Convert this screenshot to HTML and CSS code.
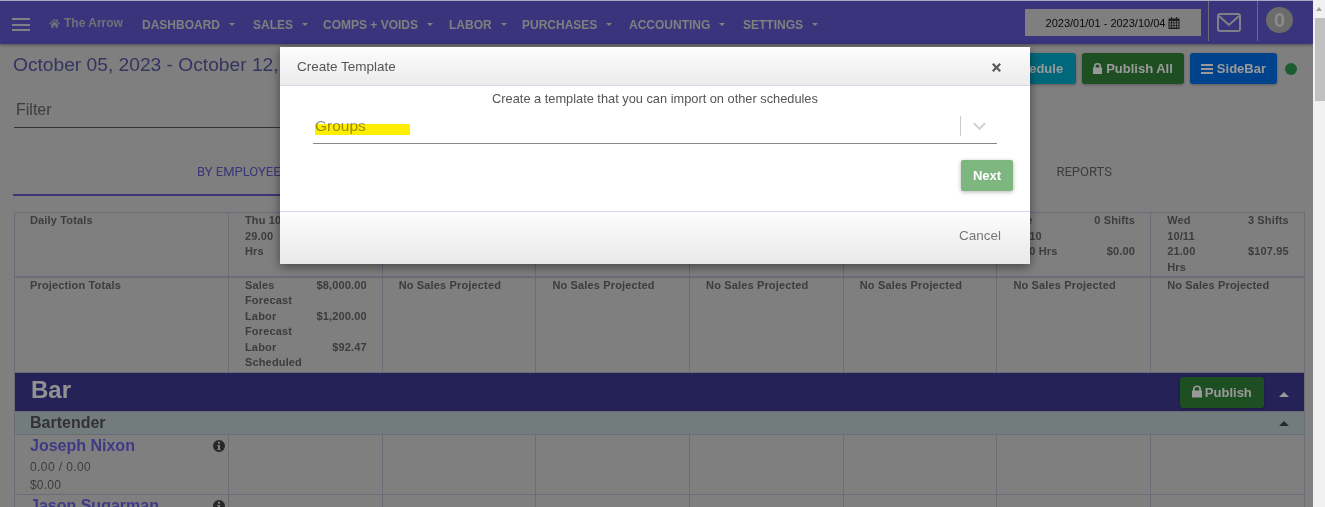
FILE: index.html
```html
<!DOCTYPE html>
<html lang="en">
<head>
<meta charset="utf-8">
<title>Create Template</title>
<link rel="stylesheet" href="styles.css">
</head>
<body>
<div class="viewport">
  <div class="app">
    <nav class="navbar">
      <span class="burger"><i></i><i></i><i></i></span>
      <a class="brand"><svg class="ico-home" viewBox="0 0 16 14"><path d="M8 1 0 8l1 1 7-6 7 6 1-1-3-2.600V1.500h-2v2.200zM3 9v5h3.500v-3.500h3V14H13V9L8 4.700z"/></svg>The Arrow</a>
      <ul class="menu">
        <li class="m1">DASHBOARD<b></b></li>
        <li class="m2">SALES<b></b></li>
        <li class="m3">COMPS + VOIDS<b></b></li>
        <li class="m4">LABOR<b></b></li>
        <li class="m5">PURCHASES<b></b></li>
        <li class="m6">ACCOUNTING<b></b></li>
        <li class="m7">SETTINGS<b></b></li>
      </ul>
      <div class="nav-right">
        <div class="date-box">2023/01/01 - 2023/10/04 <svg class="ico-cal" viewBox="0 0 12 12"><path d="M3 0h1v1.500h4V0h1v1.500h2.500V12H.5V1.500H3zM1.500 4v1.500H3V4zm2.300 0v1.500h1.700V4zm2.500 0v1.500H8V4zm2.500 0v1.500h1.700V4zM1.500 6.300V8H3V6.300zm2.300 0V8h1.700V6.300zm2.500 0V8H8V6.300zm2.500 0V8h1.700V6.300zM1.500 8.800v1.700H3V8.800zm2.300 0v1.700h1.700V8.800zm2.500 0v1.700H8V8.800zm2.500 0v1.700h1.700V8.800z" fill-rule="evenodd"/></svg></div>
        <div class="nav-cell mail"><svg class="ico-mail" viewBox="0 0 24 19"><rect x="1" y="1" width="22" height="17" rx="2" fill="none" stroke-width="2"/><path d="M2 3l10 9 10-9" fill="none" stroke-width="2"/></svg></div>
        <div class="nav-cell user"><span class="badge">0</span></div>
      </div>
    </nav>

    <main class="content">
      <div class="title-row">
        <h1 class="range">October 05, 2023 - October 12, 2023</h1>
        <div class="actions">
          <button class="btn teal">Schedule</button>
          <button class="btn green"><svg class="ico-lock" viewBox="0 0 10 12"><path d="M1 5V3.500a4 3.500 0 0 1 8 0V5h1v7H0V5zm1.800 0h4.400V3.500a2.200 2 0 0 0-4.400 0z"/></svg> Publish All</button>
          <button class="btn blue"><svg class="ico-bars" viewBox="0 0 12 10"><path d="M0 0h12v2H0zM0 4h12v2H0zM0 8h12v2H0z"/></svg> SideBar</button>
          <span class="dot"></span>
        </div>
      </div>

      <div class="filter">Filter</div>

      <div class="tabs">
        <div class="tab active">BY EMPLOYEE</div>
        <div class="tab middle"></div>
        <div class="tab">REPORTS</div>
      </div>

      <table class="grid">
        <colgroup>
          <col class="c-name"><col class="c-day"><col class="c-day"><col class="c-day"><col class="c-day"><col class="c-day"><col class="c-day"><col class="c-day">
        </colgroup>
        <tr class="totals">
          <th>Daily Totals</th>
          <td><div class="pair"><span>Thu 10/05</span><span>4 Shifts</span><span>29.00<br>Hrs</span><span>$149.50</span></div></td>
          <td></td><td></td><td></td>
          <td><div class="pair"><span></span><span></span><span><br><br>Hrs</span><span></span></div></td>
          <td><div class="pair"><span>Tue<br>10/10</span><span>0 Shifts</span><span>0.00 Hrs</span><span>$0.00</span></div></td>
          <td><div class="pair"><span>Wed<br>10/11</span><span>3 Shifts</span><span>21.00<br>Hrs</span><span>$107.95</span></div></td>
        </tr>
        <tr class="proj">
          <th>Projection Totals</th>
          <td><div class="pair"><span>Sales<br>Forecast</span><span>$8,000.00</span><span>Labor<br>Forecast</span><span>$1,200.00</span><span>Labor<br>Scheduled</span><span>$92.47</span></div></td>
          <td>No Sales Projected</td><td>No Sales Projected</td><td>No Sales Projected</td><td>No Sales Projected</td><td>No Sales Projected</td><td>No Sales Projected</td>
        </tr>
        <tr class="group">
          <td colspan="8">
            <div class="group-in">
              <span class="group-name">Bar</span>
              <button class="btn green small"><svg class="ico-lock big" viewBox="0 0 10 12"><path d="M1 5V3.500a4 3.500 0 0 1 8 0V5h1v7H0V5zm1.800 0h4.400V3.500a2.200 2 0 0 0-4.400 0z"/></svg> Publish</button>
              <span class="tri light"></span>
            </div>
          </td>
        </tr>
        <tr class="role">
          <td colspan="8"><div class="role-in"><span>Bartender</span><span class="tri dark"></span></div></td>
        </tr>
        <tr class="emp">
          <td class="emp-cell"><div class="emp-top"><a>Joseph Nixon</a><svg class="ico-info" viewBox="0 0 12 12"><path fill-rule="evenodd" d="M6 0a6 6 0 1 1 0 12A6 6 0 0 1 6 0zM5 1.800v2h2v-2zM4.200 5v1H5v3H4.200v1h3.600V9H7V5z"/></svg></div><div class="emp-hrs">0.00 / 0.00</div><div class="emp-pay">$0.00</div></td>
          <td></td><td></td><td></td><td></td><td></td><td></td><td></td>
        </tr>
        <tr class="emp">
          <td class="emp-cell"><div class="emp-top"><a>Jason Sugarman</a><svg class="ico-info" viewBox="0 0 12 12"><path fill-rule="evenodd" d="M6 0a6 6 0 1 1 0 12A6 6 0 0 1 6 0zM5 1.800v2h2v-2zM4.200 5v1H5v3H4.200v1h3.600V9H7V5z"/></svg></div></td>
          <td></td><td></td><td></td><td></td><td></td><td></td><td></td>
        </tr>
      </table>
    </main>

    <div class="backdrop"></div>

    <section class="modal">
      <header class="modal-head">
        <span>Create Template</span>
        <svg class="ico-x" viewBox="0 0 10 10"><path d="M1.800 0 5 3.200 8.200 0 10 1.800 6.800 5 10 8.200 8.200 10 5 6.800 1.800 10 0 8.200 3.200 5 0 1.800z"/></svg>
      </header>
      <div class="modal-body">
        <p class="hint">Create a template that you can import on other schedules</p>
        <div class="select">
          <span class="placeholder">Groups</span>
          <span class="mark"></span>
          <span class="sep"></span>
          <svg class="ico-chev" viewBox="0 0 14 8"><path d="M1 1l6 6 6-6" fill="none" stroke-width="2"/></svg>
        </div>
        <div class="next-row"><button class="next">Next</button></div>
      </div>
      <footer class="modal-foot">Cancel</footer>
    </section>
  </div>
  <div class="scrollbar"><span class="arrow"></span><span class="thumb"></span></div>
</div>
</body>
</html>
```
FILE: styles.css
```css
* { box-sizing: border-box; }
html, body { margin: 0; height: 507px; overflow: hidden; }
body { font-family: "Liberation Sans", Arial, sans-serif; font-size: 12px; background: #d4d4d4; color: #666; }
.viewport { display: flex; height: 507px; }
.app { position: relative; flex: 1; min-width: 0; height: 507px; overflow: hidden; border-top: 1px solid #a3a9c2; background: #d4d4d4; }
.scrollbar { width: 12px; background: #f1f1f1; display: flex; flex-direction: column; align-items: stretch; }
.arrow { height: 18px; position: relative; }
.arrow::after { content: ""; position: absolute; left: 3px; top: 7px; border: 3px solid transparent; border-top: 0; border-bottom: 4px solid #a3a3a3; }
.thumb { height: 83px; margin-left: 2px; background: #c1c1c1; }

/* navbar */
.navbar { height: 43px; background: #5f57cf; display: flex; align-items: center; color: #d4d4d4; box-shadow: 0 1px 3px rgba(0,0,0,.4); position: relative; }
.burger { width: 18px; margin-left: 12px; display: flex; flex-direction: column; gap: 3.500px; margin-top: 4px; }
.burger i { display: block; height: 2px; background: #d6d6e0; }
.brand { margin-left: 19px; width: 93px; font-weight: 700; font-size: 12px; color: #bcbcc8; display: flex; align-items: center; gap: 4px; margin-top: 1px; }
.ico-home { width: 11px; height: 10px; fill: #bcbcc8; }
.menu { list-style: none; margin: 4px 0 0; padding: 0; display: flex; font-weight: 700; font-size: 12px; }
.menu li { display: flex; align-items: center; white-space: nowrap; }
.menu b { width: 0; height: 0; border: 3.500px solid transparent; border-top: 3.500px solid #d4d4d4; border-bottom: 0; margin-left: 9px; }
.m1 { width: 111px; } .m2 { width: 70px; } .m3 { width: 126px; } .m4 { width: 73px; } .m5 { width: 107px; } .m6 { width: 114px; } .m7 { width: 80px; }
.nav-right { margin-left: auto; display: flex; align-items: flex-start; height: 43px; }
.date-box { width: 176px; height: 27px; margin: 8px 7px 0 0; background: #d4d4d4; color: #111; font-size: 11px; display: flex; align-items: center; justify-content: center; gap: 3px; }
.ico-cal { width: 12px; height: 12px; fill: #333; }
.nav-cell { border-left: 1px solid #b4b1d4; height: 40px; display: flex; align-items: center; }
.mail { width: 49px; padding-left: 8px; }
.user { width: 56px; padding-left: 8px; }
.ico-mail { width: 24px; height: 19px; stroke: #d6d6e0; margin-top: 3px; }
.badge { width: 27px; height: 26px; border-radius: 50%; background: #b2b2b2; color: #e6e6e6; font-weight: 700; font-size: 20px; display: flex; align-items: center; justify-content: center; margin-top: -2px; }

/* content */
.content { padding: 8px 9px 0 13px; }
.title-row { display: flex; justify-content: space-between; align-items: flex-start; height: 41px; }
.range { margin: 1px 0 0; font-weight: 400; font-size: 19.200px; line-height: 24px; color: #5a57a0; white-space: nowrap; }
.actions { display: flex; align-items: center; gap: 6px; margin-top: 1px; }
.btn { height: 31px; border: 0; border-radius: 3px; color: #fff; font: 700 13px "Liberation Sans", Arial, sans-serif; padding: 0 11px; white-space: nowrap; box-shadow: 0 1px 3px rgba(0,0,0,.3); display: flex; align-items: center; gap: 4px; }
.teal { background: #00aecb; width: 130px; justify-content: flex-end; padding-right: 13px; }
.green { background: #33843b; }
.blue { background: #0070ea; }
.dot { width: 12px; height: 12px; border-radius: 50%; background: #2f9a55; margin: 0 7px 0 2px; }
.ico-lock { width: 9px; height: 11px; fill: #fff; }
.ico-lock.big { width: 11px; height: 13px; margin-right: -1px; margin-top: -2px; }
.ico-bars { width: 12px; height: 10px; fill: #fff; }
.filter { height: 35px; margin: 0 700px 0 1px; border-bottom: 1px solid #555; font-size: 16px; line-height: 33px; padding-left: 2px; color: #666; }
.tabs { display: flex; margin-top: 24px; height: 44px; margin-bottom: 16px; }
.tab { font-family: Roboto, "Liberation Sans", sans-serif; font-size: 13px; text-align: center; line-height: 40px; color: #666; }
.tab:nth-child(1) { width: 452px; }
.tab:nth-child(2) { width: 400px; }
.tab:nth-child(3) { width: 440px; }
.tab.active { color: #635ac8; border-bottom: 2px solid #635ac8; }

/* grid */
.grid { table-layout: fixed; width: 1290px; margin-left: 1px; border-collapse: collapse; font-size: 11px; line-height: 15.600px; border: 1px solid #b5b3c9; }
.c-name { width: 214px; }
.c-day { width: 153.700px; }
.grid th, .grid td { border: 1px solid #b5b3c9; vertical-align: top; text-align: left; }
.totals th, .totals td, .proj th, .proj td { padding: 0 15px 0 16px; font-weight: 700; color: #666; letter-spacing: .15px; }
.totals th, .proj th { padding-left: 15px; }
.totals { height: 64px; border-bottom: 2px solid #b5b3c9; }
.proj { height: 96px; }
.pair { display: grid; grid-template-columns: 1fr auto; }
.pair span:nth-child(even) { text-align: right; }
.group td { padding: 0; background: #3e3993; }
.group-in { height: 38px; display: flex; align-items: center; padding: 0 15px 0 16px; color: #fff; }
.group-name { font-size: 24px; font-weight: 700; margin: -4px auto 0 0; color: #f4f4f4; }
.btn.small { height: 31px; width: 84px; padding: 0 12px; }
.tri { width: 0; height: 0; border: 5px solid transparent; border-top: 0; border-bottom: 5px solid; display: block; }
.tri.light { border-bottom-color: #fff; margin: 4px 0 0 15px; }
.tri.dark { border-bottom-color: #444; }
.role td { padding: 0; background: #bfcfcf; }
.role-in { height: 22px; display: flex; align-items: center; justify-content: space-between; padding: 0 15px; font-size: 16px; font-weight: 700; color: #555; }
.emp { height: 60px; }
.emp-cell { padding: 0 3px 0 15px; }
.emp-top { display: flex; justify-content: space-between; align-items: center; height: 22px; }
.emp-top a { font-size: 16px; font-weight: 700; color: #6a60e0; }
.ico-info { width: 12px; height: 12px; fill: #444; }
.emp-hrs { font-size: 12px; line-height: 18px; color: #666; margin-top: 1px; letter-spacing: .4px; }
.emp-pay { font-size: 12px; line-height: 18px; color: #666; letter-spacing: .2px; }

/* overlay */
.backdrop { position: absolute; inset: 0; background: rgba(0,0,0,.4); }
.modal { position: absolute; left: 280px; top: 46px; width: 750px; height: 217px; background: #fff; box-shadow: 0 3px 10px rgba(0,0,0,.45); display: flex; flex-direction: column; }
.modal-head { height: 39px; flex: none; display: flex; align-items: center; justify-content: space-between; padding: 0 29px 0 17px; font-size: 13.500px; color: #555; background: linear-gradient(#fdfdfd, #ebebeb); border-bottom: 1px solid #d9d5ea; }
.ico-x { width: 9px; height: 9px; fill: #5a5a5a; margin-top: 2px; }
.modal-body { flex: 1; padding: 5px 33px 0; }
.hint { margin: 0; font-size: 12.800px; line-height: 15px; text-align: center; color: #555; }
.select { position: relative; height: 38px; border-bottom: 1px solid #888; display: flex; align-items: center; padding: 3px 0 0 2px; }
.placeholder { font-size: 15.500px; color: #999; flex: 1; }
.mark { position: absolute; left: 2px; top: 18px; width: 95px; height: 11px; background: #ffee00; mix-blend-mode: multiply; }
.sep { width: 1px; height: 20px; background: #ccc; margin-right: 12px; }
.ico-chev { width: 13px; height: 8px; stroke: #ccc; margin-right: 11px; }
.next-row { display: flex; justify-content: flex-end; padding: 16px 0 0; }
.next { width: 52px; height: 31px; margin-right: -16px; border: 0; border-radius: 2px; background: #7db77f; color: #fff; font: 700 13px "Liberation Sans", Arial, sans-serif; box-shadow: 0 1px 4px rgba(0,0,0,.3); }
.modal-foot { height: 53px; flex: none; border-top: 1px solid #d9d5ea; background: linear-gradient(#fdfdfd, #e9e9e9); font-size: 13.500px; color: #777; text-align: right; padding: 16px 29px 0 0; line-height: 15px; }
```
